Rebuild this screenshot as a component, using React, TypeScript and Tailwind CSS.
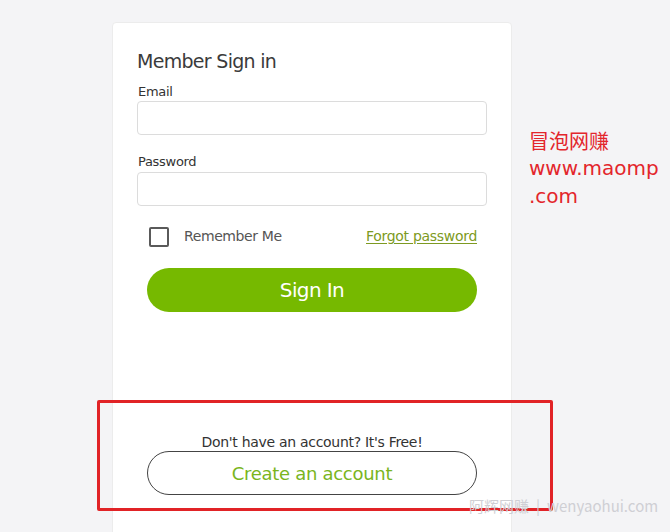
import React from "react";

const font = { fontFamily: '"DejaVu Sans", Verdana, sans-serif' };

export default function App() {
  return (
    <div
      className="relative w-[670px] h-[532px] overflow-hidden bg-[#f4f4f6]"
      style={font}
    >
      <div className="ml-[112px] mt-[22px] w-[400px] h-[540px] bg-white border border-[#ececec] rounded-[4px] px-[24px]">
        <h1 className="mt-[25px] text-[19px] leading-[26px] text-[#3b3b3b] tracking-[-0.7px]">
          Member Sign in
        </h1>
        <label className="block mt-[10px] text-[13px] leading-[16px] text-[#333] pl-[1px] tracking-[-0.3px]">
          Email
        </label>
        <input
          type="text"
          className="block mt-[1px] w-[350px] h-[34px] border border-[#dcdcdc] rounded-[4px] bg-white outline-none"
        />
        <label className="block mt-[19px] text-[13px] leading-[16px] text-[#333] pl-[1px] tracking-[-0.3px]">
          Password
        </label>
        <input
          type="password"
          className="block mt-[2px] w-[350px] h-[34px] border border-[#dcdcdc] rounded-[4px] bg-white outline-none"
        />
        <div className="mt-[20px] mx-[10px] flex items-center justify-between h-[21px]">
          <div className="flex items-center">
            <span className="ml-[2px] w-[20px] h-[20px] border-2 border-[#5a5a5a] rounded-[2px]" />
            <span className="ml-[15px] text-[14px] text-[#555] tracking-[-0.4px]">
              Remember Me
            </span>
          </div>
          <a className="text-[14px] text-[#7d9a22] underline underline-offset-2 tracking-[-0.3px]">
            Forgot password
          </a>
        </div>
        <button className="mt-[21px] mx-[10px] w-[330px] h-[44px] rounded-full bg-[#76b900] text-white text-[20px] tracking-[-0.6px]">
          Sign In
        </button>
        <p className="mt-[121px] text-center text-[14px] leading-[18px] text-[#333] tracking-[-0.3px]">
          Don't have an account? It's Free!
        </p>
        <button className="mt-0 mx-[10px] w-[330px] h-[44px] rounded-full border border-[#444] bg-white text-[#7ab51d] text-[18px] tracking-[-0.3px]">
          Create an account
        </button>
      </div>

      {/* red annotation */}
      <div className="absolute left-[529px] top-[127px] text-[20px] leading-[28px] text-[#e3262c]">
        <div style={{ fontFamily: '"Noto Sans CJK SC", sans-serif' }}>冒泡网赚</div>
        <div className="-mt-[1px]">www.maomp</div>
        <div>.com</div>
      </div>

      <div className="absolute left-[97px] top-[400px] w-[456px] h-[111px] border-[3px] border-[#e12326] rounded-[2px]" />

      <div
        className="absolute left-[469px] top-[495px] flex items-center text-[15px] text-[#cfcfd4] whitespace-nowrap"
        style={{ fontFamily: '"Noto Sans CJK SC", sans-serif' }}
      >
        <span>阿辉网赚</span>
        <span className="mx-[7px]">|</span>
        <span>wenyaohui.com</span>
      </div>
    </div>
  );
}
